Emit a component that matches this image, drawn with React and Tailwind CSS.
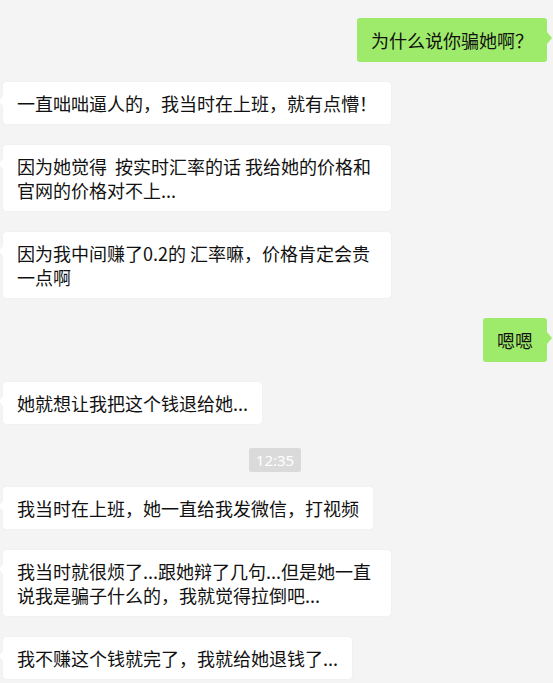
import React from "react";

const font = { fontFamily: '"Microsoft YaHei", "Noto Sans CJK SC", "Noto Sans", sans-serif' };

function Left({ children, mt }) {
  return (
    <div className={`flex pl-[3px] ${mt}`}>
      <div className="relative max-w-[388px] rounded-[3px] bg-white px-[14px] py-[9px] text-[18px] leading-[24px] text-[#111] shadow-[0_0_1px_rgba(0,0,0,0.12)]">
        <span className="absolute left-[-4px] top-[13px] h-0 w-0 border-y-[6px] border-r-[5px] border-y-transparent border-r-white" />
        {children}
      </div>
    </div>
  );
}

function Right({ children, mt }) {
  return (
    <div className={`flex justify-end pr-[6px] ${mt}`}>
      <div className="relative rounded-[3px] bg-[#9eea6a] px-[14px] py-[10px] text-[18px] leading-[24px] text-[#111]">
        <span className="absolute right-[-5px] top-[14px] h-0 w-0 border-y-[6px] border-l-[5px] border-y-transparent border-l-[#9eea6a]" />
        {children}
      </div>
    </div>
  );
}

export default function App() {
  return (
    <div className="h-[683px] w-[553px] overflow-hidden bg-[#f4f4f4] pt-[18px]" style={font}>
      <div className="flex flex-col">
        <Right mt="mt-0">为什么说你骗她啊？</Right>
        <Left mt="mt-[20px]">一直咄咄逼人的，我当时在上班，就有点懵！</Left>
        <Left mt="mt-[21px]">因为她觉得&nbsp;&nbsp;按实时汇率的话 我给她的价格和官网的价格对不上...</Left>
        <Left mt="mt-[21px]">因为我中间赚了0.2的 汇率嘛，价格肯定会贵一点啊</Left>
        <Right mt="mt-[20px]">嗯嗯</Right>
        <Left mt="mt-[20px]">她就想让我把这个钱退给她...</Left>
        <div className="mt-[24px] flex justify-center pr-[3px]">
          <div className="h-[24px] rounded-[2px] bg-[#dadada] px-[7px] text-[15px] leading-[24px] text-white" style={{ fontFamily: '"Noto Sans", "Open Sans", sans-serif' }}>
            12:35
          </div>
        </div>
        <Left mt="mt-[15px]">我当时在上班，她一直给我发微信，打视频</Left>
        <Left mt="mt-[21px]">我当时就很烦了...跟她辩了几句...但是她一直说我是骗子什么的，我就觉得拉倒吧...</Left>
        <Left mt="mt-[21px]">我不赚这个钱就完了，我就给她退钱了...</Left>
      </div>
    </div>
  );
}
